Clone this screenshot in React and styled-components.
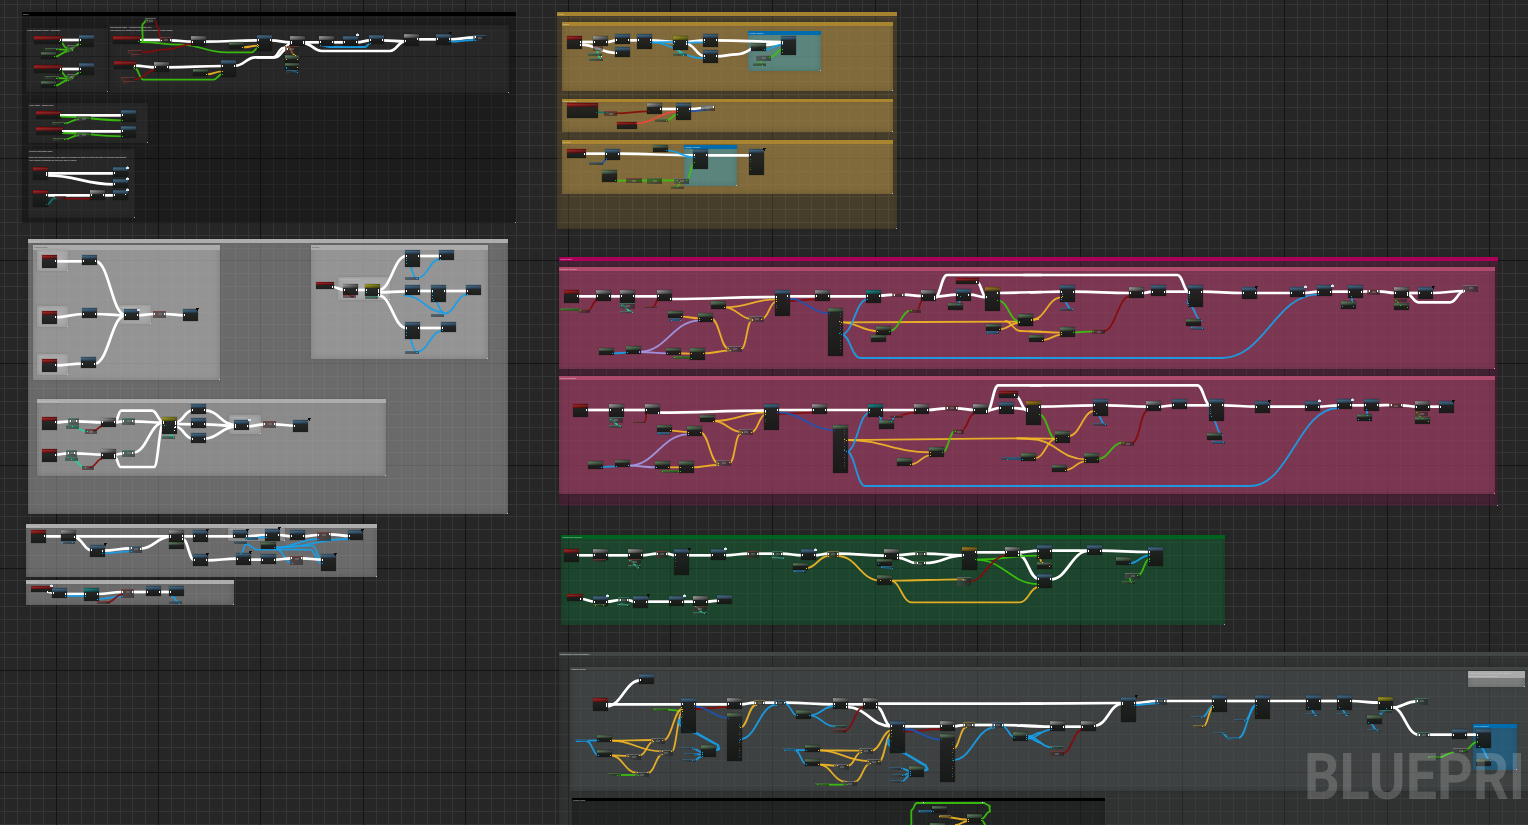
import React from "react";
import styled, { createGlobalStyle } from "styled-components";

const GlobalStyle = createGlobalStyle`
  html, body { margin: 0; padding: 0; background: #262626; overflow: hidden; }
`;

/* ---------- canvas ---------- */

const Canvas = styled.main`
  position: relative;
  width: 1528px;
  height: 825px;
  overflow: hidden;
  background: #262626;
  font-family: Roboto, "Liberation Sans", sans-serif;
`;

const Layer = styled.svg`
  position: absolute;
  inset: 0;
  width: 1528px;
  height: 825px;
  pointer-events: none;
`;

const Watermark = styled.div`
  position: absolute;
  left: 1304px;
  top: 739px;
  font: 700 64.5px/76px Roboto, sans-serif;
  color: rgba(255, 255, 255, 0.19);
  transform: scaleX(0.865);
  transform-origin: 0 0;
  white-space: nowrap;
`;

/* ---------- comment boxes ---------- */

const THEMES = {
  black: { head: "#000000", body: "rgba(8,8,8,.34)", text: "rgba(255,255,255,.6)" },
  shade: { head: "transparent", body: "rgba(62,62,62,.32)", text: "rgba(255,255,255,.62)" },
  gold: { head: "#a5822e", body: "rgba(140,112,56,.32)", text: "rgba(255,255,255,.5)" },
  goldInner: { head: "#a9852f", body: "rgba(174,142,74,.56)", text: "rgba(255,255,255,.5)" },
  sky: { head: "#006cb0", body: "rgba(62,152,172,.58)", text: "rgba(255,255,255,.6)" },
  gray: { head: "#adadad", body: "rgba(168,168,168,.52)", text: "rgba(255,255,255,.3)" },
  grayInner: { head: "#ababab", body: "rgba(190,190,190,.5)", text: "rgba(40,40,40,.55)" },
  pale: { head: "rgba(205,205,205,.08)", body: "rgba(205,205,205,.4)", text: "rgba(255,255,255,.25)" },
  pink: { head: "#ab005a", body: "rgba(114,30,74,.38)", text: "rgba(255,255,255,.55)" },
  pinkInner: { head: "#ae4a6c", body: "rgba(162,70,104,.6)", text: "rgba(255,255,255,.5)" },
  green: { head: "#00621f", body: "rgba(22,96,50,.52)", text: "rgba(255,255,255,.5)" },
  slate: { head: "#434646", body: "rgba(66,68,68,.36)", text: "rgba(255,255,255,.6)" },
  slateInner: { head: "#434646", body: "rgba(88,91,91,.38)", text: "rgba(255,255,255,.6)" },
  note: { head: "#ababab", body: "rgba(180,180,180,.52)", text: "rgba(255,255,255,.35)" },
  ocean: { head: "#006cb0", body: "rgba(20,110,165,.56)", text: "rgba(255,255,255,.6)" },
};

const CommentBox = styled.section`
  position: absolute;
  box-sizing: border-box;
  left: ${(p) => p.$x}px;
  top: ${(p) => p.$y}px;
  width: ${(p) => p.$w}px;
  height: ${(p) => p.$h}px;
  display: flex;
  flex-direction: column;
  background: ${(p) => THEMES[p.$theme].body};
  box-shadow: inset 0 0 6px rgba(0, 0, 0, 0.16), 0 0 3px rgba(0, 0, 0, 0.12);

  &::after {
    content: "";
    width: 1px;
    height: 1px;
    margin: auto 0 0 auto;
    background: rgba(255, 255, 255, 0.6);
  }
`;

const CommentHeader = styled.header`
  flex: none;
  height: ${(p) => p.$h}px;
  background: ${(p) => THEMES[p.$theme].head};
`;

const CommentText = styled.div`
  padding: 1px 0 0 1px;
  font-size: 2.3px;
  line-height: 3px;
  font-weight: 700;
  color: ${(p) => THEMES[p.$theme].text};
  white-space: pre;
`;

const COMMENTS = [
  ["black", 22, 12, 494, 211, 4, "Move"],
  ["shade", 26, 28, 82, 64, 4, "Look and move input - gamepad"],
  ["shade", 109, 25, 400, 68, 4, "Movement input - forward and right axis\nThe values are scaled by speed and then applied to the pawn"],
  ["shade", 28, 103, 120, 40, 4, "Look input - mouse turn"],
  ["shade", 28, 149, 107, 69, 4, "Crouch and jump input\n\nBind the jump action here, the jump is released on stop so that hold time is used by movement\nThe crouch is toggled by one key and is saved"],
  ["gold", 557, 12, 340, 217, 4, "Setup"],
  ["goldInner", 562, 22, 331, 69, 4, "Begin"],
  ["sky", 748, 31, 73, 40, 4, "Create widget"],
  ["goldInner", 562, 99, 331, 33, 3, "Input handler"],
  ["goldInner", 562, 140, 331, 54, 4, "On tick"],
  ["sky", 684, 145, 53, 41, 4, "Update widget"],
  ["gray", 28, 239, 480, 275, 4, "Interaction"],
  ["grayInner", 33, 245, 187, 135, 5, "Switch items"],
  ["grayInner", 311, 245, 177, 114, 5, "Reload"],
  ["gray", 37, 399, 349, 77, 4, "Weapon select state"],
  ["pale", 37, 250, 31, 21, 4, "Item 1"],
  ["pale", 37, 306, 31, 21, 4, "Item 2"],
  ["pale", 37, 354, 31, 21, 4, "Item 3"],
  ["pale", 119, 305, 32, 19, 4, "Equip selected"],
  ["pale", 229, 415, 32, 19, 4, "Equip selected"],
  ["pale", 338, 277, 52, 23, 4, "Check state of item"],
  ["gray", 26, 524, 351, 53, 4, "Pick up item"],
  ["pale", 228, 527, 57, 14, 3, "Add"],
  ["gray", 26, 580, 208, 25, 4, "Drop item"],
  ["pink", 559, 257, 939, 249, 4, "Shoot trace"],
  ["pinkInner", 559, 267, 936, 102, 4, "Primary weapon"],
  ["pinkInner", 559, 376, 936, 118, 4, "Second weapon"],
  ["green", 561, 535, 664, 90, 4, "Health and damage"],
  ["slate", 559, 652, 980, 190, 4, "Camera and view movement"],
  ["slateInner", 570, 667, 970, 124, 3, "Camera boom"],
  ["note", 1468, 671, 57, 16, 7, "Set the current view target to the camera\nthat is near the player pawn"],
  ["ocean", 1473, 724, 44, 46, 4, "Final viewport"],
  ["black", 572, 798, 533, 40, 3, "Debug draw"],
];

/* ---------- nodes ---------- */

const HEAD = {
  r: ["#8f1111", "#5a0d0d"],
  g: ["#8a8a8a", "#3b3b3b"],
  b: ["#30566f", "#2a4258"],
  v: ["#4d6b4c", "#2d3b2d"],
  y: ["#8d8a12", "#56540e"],
  o: ["#8f6a10", "#5a430c"],
  t: ["#0f7474", "#0a4a4a"],
};

const NodeBox = styled.article`
  position: absolute;
  left: ${(p) => p.$x}px;
  top: ${(p) => p.$y}px;
  width: ${(p) => p.$w}px;
  height: ${(p) => p.$h}px;
  background: linear-gradient(180deg, rgba(34, 36, 36, 0.93), rgba(20, 22, 20, 0.93));
  box-shadow: 0 0 1px rgba(0, 0, 0, 0.5);
`;

const NodeHead = styled.div`
  height: ${(p) => p.$h}px;
  background: linear-gradient(180deg, transparent 0 25%, rgba(255, 255, 255, 0.1) 40%, rgba(0, 0, 0, 0.35) 100%),
    linear-gradient(90deg, ${(p) => HEAD[p.$kind][0]}, ${(p) => HEAD[p.$kind][1]});
`;

const TINT = {
  w: "130,130,130",
  r: "140,60,60",
  b: "60,110,145",
  v: "80,125,70",
  y: "165,140,70",
  t: "70,140,115",
};

const CompactNode = styled.article`
  position: absolute;
  box-sizing: border-box;
  left: ${(p) => p.$x}px;
  top: ${(p) => p.$y}px;
  width: ${(p) => p.$w}px;
  height: ${(p) => p.$h}px;
  border-top: 1px solid rgba(${(p) => TINT[p.$tint]}, 0.6);
  background: linear-gradient(90deg, rgba(${(p) => TINT[p.$tint]}, 0.28), rgba(0, 0, 0, 0.1)),
    rgba(34, 36, 36, 0.52);
  &::after {
    content: "";
    box-sizing: border-box;
    display: ${(p) => (p.$h > 4 ? "block" : "none")};
    width: 4px;
    height: 2px;
    margin: 1px auto 0;
    background: rgba(180, 180, 180, 0.28);
  }
`;

/* ---------- wires ---------- */

const COLORS = {
  w: "#ffffff",
  g: "#3ac40c",
  r: "#860b0b",
  R: "#f0453c",
  b: "#179fe8",
  B: "#1b55b4",
  y: "#f2b626",
  t: "#25d29c",
  T: "#0b7a6e",
  l: "#a298e6",
};
const MIX = ["#1f8fb8", "#3a9a1c", "#7a1414", "#1c6f63", "#b58a20", "#5a3a7a"];

/*
 * Each graph holds its origin on the canvas and its items in graph units,
 * three to a pixel.
 *   nodes: kind x y w h   (kind + "k" prefix = compact node with a tint)
 *   wires: color x y x y ...
 *   marks: color x y      (single pin), "col" x y0 y1 for a column of pins,
 *          "badge" x y for a latent / message marker
 */
const GRAPHS = [
  {
    at: [0, 0],
    nodes: `r 102 108 84 24;b 237 105 45 36;v 123 156 45 20;kv 135 144 42 9;kw 202 136 30 22
      r 102 195 84 24;b 237 190 45 36;v 123 243 45 20;kv 135 228 42 9;kw 202 222 30 22
      r 339 108 84 24;kw 435 54 33 15;kr 480 111 36 16;g 573 108 45 30;kr 384 150 42 12;kr 393 162 30 9;v 687 127 45 20;b 771 105 45 48
      r 342 184 66 24;g 462 186 45 30;kr 363 231 42 12;kr 369 243 36 10;v 579 207 45 20;b 663 180 45 50
      r 108 333 75 24;b 363 330 45 36;kv 156 366 42 8;kw 228 349 45 14
      r 108 381 81 24;b 363 378 45 36;kv 160 414 42 8;kw 228 397 45 14
      r 99 501 45 39;b 339 501 45 30;b 339 537 45 27
      r 99 570 45 51;kr 165 588 33 12;g 270 570 45 30;b 339 570 45 30`,
    wires: `w 184 120 240 120;g 180 124 200 144 215 148;g 170 148 215 150;g 215 144 240 132;g 165 170 205 153
      w 184 207 240 207;g 180 212 200 230 215 234;g 170 234 215 236;g 215 230 240 218;g 165 257 205 240
      w 422 120 484 120;w 512 121 576 125;w 616 125 775 121;g 422 126 540 134 680 157 755 157 775 143;r 425 157 500 148 576 132
      g 427 126 428 72 440 60;r 465 62 474 84 482 118;y 728 142 775 137
      w 404 197 466 202;w 504 202 667 198;g 404 204 430 239 640 239 667 222;r 405 238 466 210;y 620 223 667 214;w 706 197 766 172 826 172 862 146
      w 182 346 367 346;g 182 350 367 361;g 195 370 235 358
      w 188 394 367 394;g 188 399 367 409;g 195 418 235 406
      w 140 520 343 520;w 140 526 343 553;w 140 586 273 586;w 312 586 343 586;T 140 614 165 594;r 190 596 273 596`,
    marks: `badge 382 504;badge 382 536;badge 382 569;g 179 125;g 179 212;w 378 586;g 417 127;g 403 204`,
  },
  {
    at: [250, 0],
    nodes: `g 120 108 45 30;kr 105 138 42 24;v 105 165 43 24;v 105 189 43 21;kb 108 210 36 8
      g 207 108 45 30;b 279 108 45 30;b 357 105 45 27;g 462 102 45 36;b 558 102 45 32;kb 669 105 39 18`,
    wires: `w 62 121 123 127;w 162 127 210 127;w 249 127 283 127;w 320 127 361 121;w 398 121 465 124;w 162 130 215 153 420 153 465 124
      w 504 118 562 118;w 600 118 675 112;b 600 125 675 120;b 212 136 240 141 345 141 361 130;w 20 172 70 172 100 144 123 129
      y 112 140 135 165;b 112 206 140 216`,
    marks: `y 112 181;y 145 181;b 112 205;y 145 205;y 25 136;y 25 142;badge 322 106;mark 601 100`,
  },
  {
    at: [550, 0],
    nodes: `r 51 108 45 39;g 129 108 45 30;kr 129 138 30 15;kt 114 159 42 9;kt 117 174 42 9;b 195 102 45 30;b 195 141 45 30;b 261 102 45 45
      y 369 108 45 42;kt 369 159 42 9;b 459 102 45 39;b 459 150 45 39;v 603 130 45 23;b 693 108 45 57;kw 618 165 45 18;kv 609 188 39 9
      r 51 309 93 45;kr 162 333 39 14;r 201 366 60 21;g 291 309 45 33;kv 315 357 39 8;b 378 309 45 51;kw 453 315 42 18
      r 51 447 57 27;b 165 447 45 33;kb 117 486 42 8;v 309 435 45 21;b 429 447 45 60;v 156 510 45 36;kr 228 534 48 15;kv 291 534 45 18;kw 372 534 45 18;kv 363 558 39 9;b 597 447 45 78`,
    wires: `w 92 126 133 126;w 170 126 199 121;w 236 121 265 121;w 92 134 199 159;w 302 121 373 126;b 302 127 373 126;b 302 127 463 175;w 410 126 463 121
      b 410 128 463 127;w 410 132 463 168;w 500 121 697 126;w 500 169 560 163 640 135 697 130;b 645 149 697 133;g 660 171 697 149;g 632 185 635 196;t 138 148 150 175;t 373 134 400 166
      T 140 336 170 338;r 198 340 295 334;w 332 327 382 327;R 260 370 382 335;g 350 361 382 343;w 420 327 490 321;B 420 334 470 330
      w 104 461 169 461;w 206 461 433 466;w 470 466 601 466;b 350 451 433 472;B 155 491 169 478;g 197 542 380 541;g 385 558 388 548;g 410 541 433 488`,
    marks: `w 201 159;mark 642 448;w 157 172;col 604 476 516;B 172 476;g 700 149;g 700 160;r 733 134`,
  },
  {
    at: [20, 230],
    nodes: `r 66 75 45 39;b 186 75 45 30;r 66 243 45 39;b 186 234 45 30;r 66 387 45 39;b 183 381 45 33;b 312 238 45 32;kr 399 243 39 21;b 489 237 45 36
      r 66 561 45 39;kt 144 564 33 21;kt 138 585 39 12;kr 195 596 36 15;g 243 564 45 27;kt 306 564 39 21;y 426 561 45 51;kt 426 618 39 9
      b 513 522 45 30;b 513 564 45 30;b 513 609 45 30;b 642 570 45 30;kr 729 573 39 21;b 819 570 45 36
      r 66 657 45 39;kt 138 661 33 20;kt 135 681 39 12;kr 186 708 36 12;g 243 657 45 30;kt 306 660 39 21`,
    wires: `w 107 94 190 94;w 107 262 190 252;w 107 406 187 401;w 227 94 316 255;w 227 252 316 256;w 224 401 316 256;w 353 256 403 252;w 434 252 493 256
      w 107 577 150 574;w 172 574 247 577;w 284 577 310 574;w 284 577 304 542 396 542 430 576;w 340 574 430 578;t 158 590 200 604;r 222 602 247 588
      w 107 674 145 670;w 166 670 247 674;w 284 674 310 670;w 340 668 430 578;w 284 680 302 711 402 711 430 580;t 155 687 195 712;r 210 712 247 686
      w 467 577 517 541;w 467 582 517 583;w 467 590 517 626;w 554 541 646 585;w 554 583 646 588;w 554 626 646 590;w 683 589 733 583;w 765 583 823 587;t 434 586 460 622`,
    marks: `badge 355 239;badge 687 571;mark 532 238;mark 866 568;w 466 595;w 466 604`,
  },
  {
    at: [300, 230],
    nodes: `r 48 156 54 21;g 129 162 45 33;kr 129 195 39 9;y 195 162 45 36;kt 195 198 39 9
      b 315 60 45 51;b 417 60 45 30;kb 315 141 42 9;b 315 165 45 30;b 393 165 45 51;b 498 165 45 30;kb 393 252 39 9;b 315 276 45 51;b 423 276 45 30;kb 315 363 42 9`,
    wires: `w 98 171 133 180;w 170 180 199 180;w 236 180 319 78;w 236 187 319 184;w 236 196 319 294;w 356 78 421 78;w 356 183 397 183;w 434 183 502 183;w 356 294 427 294
      b 320 90 350 145;b 350 145 421 87;b 313 196 432 247;b 402 210 432 250;b 432 252 502 193;b 320 306 350 366;b 350 366 427 302;r 135 186 160 200;t 202 186 230 200`,
    marks: `b 321 86;b 321 94;b 321 102;b 400 190;b 400 198;b 400 206;b 321 300;b 321 310;b 321 318`,
  },
  {
    at: [20, 515],
    nodes: `r 33 45 45 39;g 123 45 45 33;kb 129 79 36 9;b 210 90 45 36;kb 328 94 38 20;g 447 45 45 36;v 447 81 45 21;b 519 45 45 36;b 519 118 45 36
      b 639 45 45 24;kb 642 79 38 10;kb 676 66 38 8;b 735 42 45 36;b 810 45 45 30;kr 891 51 42 27;b 984 45 45 30;v 723 81 45 21;b 648 114 45 36;b 723 118 45 30;kr 810 123 39 27;b 903 118 45 50
      r 33 213 66 18;b 96 219 45 30;t 192 219 45 39;kr 303 222 39 27;kr 231 258 39 9;b 378 213 45 30;b 447 213 45 30;kb 447 259 39 8`,
    wires: `w 74 64 451 64;w 164 67 214 106;w 250 107 332 100;b 250 115 332 109;w 362 101 451 65;w 488 64 523 64;w 488 72 523 136;w 560 64 643 64;w 560 136 652 131;w 680 64 739 60
      w 776 60 814 64;w 851 64 895 60;w 929 58 988 63;b 680 72 739 66;b 765 98 895 72;b 765 98 988 72;b 765 98 878 92 905 136;b 765 104 870 104 905 146;b 765 98 815 144
      b 678 87 712 104 765 104;b 664 116 678 87;w 689 134 727 134;w 764 134 814 130;w 845 130 907 134
      w 84 230 100 234;w 137 237 196 237;b 137 243 196 243;w 233 237 307 231;b 233 252 307 244;w 338 231 382 231;w 419 231 451 231;r 262 262 307 238;b 455 243 478 264`,
    marks: `mark 256 88;mark 562 45;mark 562 117;mark 682 46;mark 778 40;mark 689 112;mark 944 118;mark 1027 46;badge 94 214;b 130 84;b 160 84`,
  },
  {
    at: [555, 250],
    nodes: `r 27 120 45 39;kv 18 174 54 8;kr 72 177 33 12;g 123 120 45 33;g 195 120 45 39;kt 195 159 45 18;kt 195 183 39 7;g 306 120 45 33;kr 267 168 39 7
      v 339 183 45 21;kb 342 205 36 9;v 429 189 45 27;v 468 153 45 24;kw 582 198 45 18;b 660 120 45 78;g 780 120 45 33;v 819 174 45 144
      v 132 294 45 21;v 213 288 45 24;v 333 294 45 21;kv 354 318 51 8;v 405 294 45 36;kw 516 288 45 18;t 933 120 45 39;kr 1011 129 39 12;g 1098 120 45 33
      v 963 228 45 27;v 948 255 45 21;kr 1062 177 36 12;r 1203 84 69 18;b 1203 117 45 36;v 1179 159 45 21;o 1290 111 45 72;v 1389 192 45 36;v 1293 222 45 21;kb 1293 244 39 9`,
    wires: `w 68 139 127 139;w 164 139 199 139;w 236 139 310 139;w 347 147 664 141;w 700 139 784 139;w 821 139 937 139;w 974 137 1016 134;w 1045 134 1102 138;w 1139 140 1207 134;w 1139 144 1176 75 1300 75 1460 75
      g 20 178 76 180;r 98 182 127 150;r 295 170 310 149;t 200 165 230 186;b 350 210 375 210;y 380 200 433 205;y 510 172 664 148;y 510 172 590 207;y 620 207 664 155;y 470 207 520 296
      y 560 296 590 212;y 446 310 525 302;y 374 310 409 311;l 255 305 433 212;l 255 306 337 310;b 173 310 217 308;g 360 322 409 324;r 700 153 784 148;B 700 146 823 190
      y 860 217 967 243;y 860 217 1350 215 1393 215;b 860 253 937 148;b 860 253 915 324 1460 324;g 1004 243 1068 181;r 1085 186 1102 152;w 1265 95 1294 142;w 1243 134 1294 142;w 1330 129 1460 126;g 1330 152 1393 214
      y 1334 238 1393 218;y 1350 213 1395 243 1460 245;y 1430 209 1450 207;b 1212 162 1215 140;b 1300 248 1325 248`,
    marks: `col 859 190 312;col 666 164 190;y 856 217;b 856 253;w 1139 149;r 987 243`,
  },
  {
    at: [1030, 250],
    nodes: `v -33 192 42 36;b 90 105 45 50;kb 90 174 38 8;v 90 231 45 30;v -3 255 45 21;kr 186 237 39 15;g 297 111 45 33;b 363 105 45 33;b 474 105 45 66;v 468 207 45 21;kb 483 231 38 8
      b 636 111 45 36;b 780 111 45 30;b 861 105 45 33;b 954 105 45 39;v 933 153 45 24;kr 1011 117 39 17;g 1092 111 45 33;kr 1092 144 39 12;v 1092 158 45 21;b 1164 111 45 36;kw 1299 105 45 21`,
    wires: `w 0 127 94 125;w 131 125 301 129;w 338 129 367 125;w 404 125 478 125;w -20 75 442 75 478 128;w 515 125 640 129;w 677 129 784 129;w 821 129 865 125;w 902 125 958 125;w 995 125 1016 124
      w 1045 124 1096 129;w 1133 129 1168 129;w 1205 129 1303 123;w 1133 134 1165 157 1260 157 1303 123;y 5 210 94 142;b 97 148 125 178;y 0 244 94 248;y 38 270 94 254;g 131 247 190 244;r 220 244 301 138
      b 478 165 512 210;b 485 232 515 236;b -60 324 575 324 865 133;b 965 140 967 155;b 478 130 474 160;g 1098 150 1110 165`,
    marks: `mark 679 112;badge 824 112;badge 906 107;mark 1208 112;col 481 134 160;y 98 140;b 98 134;b 939 172;g 1133 175;b 973 172`,
  },
  {
    at: [555, 250],
    nodes: `r 54 462 45 39;g 162 462 45 39;kt 162 501 42 18;kt 162 525 39 8;g 270 462 45 30;kr 234 513 39 7;v 306 525 45 21;kb 306 547 38 9;v 396 528 45 30;v 435 495 45 21;kw 552 537 42 18
      b 627 462 45 78;g 771 462 45 30;v 834 525 45 144;v 99 633 45 24;v 180 630 45 21;v 300 633 45 24;kv 318 660 50 8;v 372 633 45 36;kw 483 630 45 18;t 939 462 45 39;v 972 510 45 27;kr 1005 495 40 8
      g 1077 462 45 30;kr 1170 465 39 19;g 1254 462 45 30;kr 1194 537 33 14;v 1122 591 45 30;v 1026 624 45 24;r 1332 423 57 21;b 1332 456 45 36;o 1413 453 45 72;kb 1338 621 60 9;v 1398 609 45 24`,
    wires: `w 95 480 166 480;w 203 480 274 480;w 311 488 631 482;w 668 480 775 480;w 812 480 943 480;w 980 480 1081 480;w 1118 480 1175 475;w 1205 475 1258 480;w 1295 482 1336 474;w 1295 486 1330 406 1460 406
      t 168 508 195 530;r 270 515 275 490;b 312 550 340 550;y 347 542 400 546;y 476 513 631 488;y 476 513 560 546;y 590 546 631 494;y 437 548 490 640;y 525 638 555 553;y 413 652 490 645;y 341 652 376 652
      l 221 647 400 553;l 221 647 304 652;b 140 651 184 649;g 325 664 376 664;r 668 492 775 488;B 668 487 838 540;y 875 570 1420 565;y 875 570 1126 607;b 875 604 943 488;b 875 604 930 708 1460 708
      b 976 500 978 514;b 1012 514 1016 500;r 1012 500 1081 488;y 1067 643 1126 616;g 1163 606 1200 543;r 1220 541 1258 490;w 1380 436 1417 482;w 1373 474 1417 478;b 1360 627 1402 627`,
    marks: `col 871 540 662;col 634 506 532;y 871 570;b 871 604`,
  },
  {
    at: [1030, 250],
    nodes: `b 189 447 45 51;kb 189 519 41 8;g 348 453 45 30;b 426 447 45 30;b 537 447 45 66;v 531 549 45 21;kb 546 573 38 8;v 75 543 45 36;v 162 609 45 30;v 66 645 45 21;kr 273 573 39 14
      b 675 453 45 36;b 825 453 45 30;b 921 447 45 30;b 1002 447 45 36;v 981 492 45 21;kr 1077 459 42 15;g 1155 453 45 30;kr 1155 483 39 14;v 1155 501 45 21;b 1227 453 45 36`,
    wires: `w 29 470 193 466;w 230 466 352 470;w 389 470 430 466;w 467 466 541 466;w 0 406 502 406 541 466;w 578 466 679 470;w 716 470 829 470;w 866 470 925 466;w 962 466 1006 466;w 1043 466 1082 465;w 1115 466 1159 470;w 1196 470 1231 470
      g 29 494 79 570;y 116 558 193 483;b 200 490 225 523;y -40 565 79 566;y -40 565 0 567 166 628;y 15 625 79 566;y 107 660 166 634;g 203 627 278 578;r 308 578 352 482
      b 0 708 660 708 925 474;b 541 470 539 490;b 545 500 575 555;b 550 575 578 578;b 1010 478 1012 495;g 1160 488 1175 504`,
    marks: `col 544 476 506;mark 718 452;badge 868 452;badge 965 450;mark 1270 452;b 988 509;b 1021 509;g 1196 517`,
  },
  {
    at: [555, 525],
    nodes: `r 27 72 45 39;g 114 72 45 33;kr 114 103 39 8;g 219 72 45 30;kr 219 103 38 16;kt 219 121 38 8;kr 303 78 36 20;b 357 72 45 78;b 468 72 45 33;kr 576 78 36 20;kt 651 78 33 18;kt 651 97 36 8;b 738 72 45 33;v 714 114 45 21;kb 714 136 38 8;ky 816 78 36 20
      r 36 207 48 21;b 114 213 45 30;kv 114 237 38 8;kt 190 216 33 18;kt 186 236 38 8;b 234 213 45 36;b 342 213 45 30;g 414 213 45 30;kr 414 243 42 14;kt 414 260 42 8;b 486 210 45 27`,
    wires: `w 68 91 118 91;w 155 91 223 91;w 260 91 307 86;w 335 86 361 91;w 398 91 472 91;w 509 91 580 86;w 608 86 655 86;w 680 86 742 91;w 779 91 820 86;w 848 86 991 92
      y 755 129 820 93;y 848 93 975 167;t 225 106 250 128;t 655 97 684 101;b 720 139 745 139;w 78 222 118 230;w 155 230 195 225;w 218 225 238 230;w 275 230 346 230;w 383 230 418 230;w 455 230 490 227;t 195 238 215 240;t 422 245 446 265;g 122 240 145 240`,
    marks: `mark 401 73;badge 510 73;badge 780 74;badge 156 214;mark 278 211;badge 387 214;col 364 100 138`,
  },
  {
    at: [860, 525],
    nodes: `g 72 72 45 33;v 51 102 45 21;kb 63 124 38 8;kv 165 78 36 18;kv 162 108 36 14;o 306 66 45 69;g 435 66 45 30;kw 291 156 42 27;v 51 150 45 30;b 531 60 45 42;v 531 111 45 21;b 531 147 45 42;b 681 60 45 30;b 864 66 45 57;v 768 96 45 24;kw 795 144 45 18;kv 787 169 38 9`,
    wires: `w 113 90 170 86;w 113 98 170 114;w 196 86 310 91;w 196 114 310 91;w 347 82 439 82;w 476 82 535 77;w 572 77 685 77;w 722 77 868 81;w 476 90 535 161;w 572 163 685 78
      g 347 104 535 92;g 347 104 535 177;r 325 170 439 92;y 92 167 310 163;y 92 167 155 232 480 232 535 186;y 538 96 545 112;b 809 115 868 91;g 835 151 868 102;g 810 160 812 172;b 65 126 95 130`,
    marks: `col 312 92 114;b 56 118;r 90 118;y 570 127;b 871 91;g 871 103;b 871 111`,
  },
  {
    at: [555, 645],
    nodes: `r 114 159 45 39;b 252 87 45 30;b 378 159 45 105;kv 294 189 45 8;g 516 159 45 33;v 516 204 45 144;ky 597 165 33 15;kb 657 165 36 15;v 723 195 45 27;g 834 159 45 33;kt 834 240 39 10;kr 834 252 39 12;g 924 159 45 33
      kb 60 283 38 7;v 126 270 45 21;v 126 315 45 21;kw 288 279 42 18;kw 213 327 45 18;kw 312 315 42 18;kw 240 380 42 16;kv 159 385 38 9;kb 378 307 45 7;kb 387 324 40 7;kb 381 343 42 8;v 438 300 45 36
      b 1005 228 45 96;g 1155 228 45 30;v 1155 267 45 144;ky 1224 232 36 17;kb 1311 232 36 17;v 1374 261 45 27;kb 684 310 38 8;v 750 300 45 21;v 750 342 45 21;kw 912 310 42 17;kw 837 358 45 17;kw 936 343 42 17;kw 864 408 42 15;kv 780 414 42 8
      kb 1002 366 42 8;kb 1011 386 40 8;kb 1005 405 40 8;v 1062 363 45 33;v 1131 483 45 20;kb 1089 495 38 8;ky 1152 510 36 8;v 1236 507 45 27;v 1125 534 45 24`,
    wires: `w 155 184 256 106;w 155 178 382 178;w 419 178 520 178;w 557 178 600 173;w 626 173 662 173;w 690 173 838 178;w 875 178 928 178;w 965 176 1460 176;w 875 186 1009 244;w 965 186 1009 244;w 1046 244 1159 244;w 1196 244 1228 240;w 1255 240 1316 240;w 1343 240 1460 244
      g 300 194 340 194 382 198;r 419 192 520 186;B 419 185 520 219;y 557 247 602 180;b 557 282 662 180;b 690 176 727 212;b 764 211 838 183;b 764 211 838 244;r 865 260 928 185
      b 65 288 128 286;b 95 288 130 331;y 167 287 292 285;y 167 287 320 319;y 167 331 220 333;y 255 331 295 290;y 167 331 245 383;y 280 383 322 328;y 325 286 382 192;y 350 320 382 200;g 190 390 250 390
      BB 382 225 372 226 374 238 392 255 425 265 488 300 492 312 482 315;b 415 311 442 322;b 420 328 442 328;b 415 347 442 334
      y 1196 310 1232 248;b 1196 345 1318 248;b 1343 244 1378 276;b 1415 276 1460 262;b 1415 276 1460 294;r 1046 260 1159 252;B 1046 252 1159 284;b 690 315 754 315;b 720 315 754 358
      y 791 316 918 317;y 791 316 940 348;y 791 358 845 362;y 880 362 918 322;y 791 358 872 410;y 900 410 945 356;y 950 317 1009 256;y 972 350 1009 265;g 790 419 875 419;BB 1009 285 999 287 1001 298 1015 310 1048 324 1112 362 1117 373 1107 377;b 1040 371 1066 378;b 1045 390 1066 384;b 1040 409 1066 390
      g 1108 474 1290 474;g 1280 521 1304 500 1304 485 1290 474;g 1280 526 1296 545;g 1068 545 1070 495 1085 474 1108 474;b 1095 499 1135 499;y 1155 514 1240 524;y 1200 540 1240 528`,
    marks: `col 556 236 340;col 1195 290 404;col 384 206 245;col 1011 265 300;y 382 188;y 382 196;b 382 219;w 1108 474;w 1285 474`,
  },
  {
    at: [1030, 645],
    nodes: `g 60 228 45 30;g 153 228 45 30;kt 60 304 38 8;kr 60 318 42 14;b 273 156 45 75;kb 375 159 36 20;b 546 150 45 51;b 675 150 45 72;kb 483 213 38 7;ky 489 241 36 8;kb 549 262 40 7;kb 588 276 40 7;kb 612 223 38 7;b 828 150 45 45;kb 828 205 38 7;b 921 150 45 45;kb 921 205 38 7
      y 1044 156 45 39;kt 1050 194 36 8;v 1011 210 45 27;kb 1011 253 38 7;kt 1155 159 39 20;kt 1162 262 38 16;b 1266 252 45 30;b 1338 252 45 57;kw 1269 309 45 15;kv 1194 334 38 8;v 1338 342 45 21`,
    wires: `w -30 176 277 174;w -30 242 64 245;w 101 245 157 245;w 194 242 277 176;b -10 282 64 254;b -10 272 64 307;r 98 325 157 254;w 314 174 380 168;b 314 180 385 175;w 405 168 550 168;w 587 168 679 168;w 716 168 832 168;w 869 168 925 168;w 962 168 1048 173
      w 1085 188 1160 169;w 1085 186 1166 269;w 1196 269 1270 269;w 1307 269 1342 269;b 517 216 550 183;y 520 245 550 186;b 645 226 679 180;b 580 266 595 280 625 279 679 180;b 838 186 858 210;b 931 186 951 210;b 1070 190 1052 208;b 1018 232 1042 256;g 1228 337 1270 322;g 1300 318 1342 291;b 1350 305 1380 345;g 1198 337 1230 337`,
    marks: `mark 317 153;col 682 180 212;r 835 184;r 928 184;y 550 184;b 1344 278;g 1344 290`,
  },
];

const rows = (text) =>
  text
    .split(/[;\n]/)
    .map((row) => row.trim().split(/\s+/))
    .filter((row) => row.length > 2)
    .map(([kind, ...nums]) => [kind, ...nums.map(Number)]);

const place = ([ox, oy]) => ({
  x: (v) => ox + v / 3,
  y: (v) => oy + v / 3,
});

function curve(points) {
  let d = `M${points[0][0]} ${points[0][1]}`;
  for (let i = 1; i < points.length; i++) {
    const [ax, ay] = points[i - 1];
    const [bx, by] = points[i];
    const reach = Math.max(Math.abs(bx - ax) * 0.45, 1);
    d += ` C${ax + reach} ${ay} ${bx - reach} ${by} ${bx} ${by}`;
  }
  return d;
}

const pointsOf = (nums, at) => {
  const { x, y } = place(at);
  const out = [];
  for (let i = 0; i < nums.length; i += 2) out.push([x(nums[i]), y(nums[i + 1])]);
  return out;
};

function Wire({ kind, nums, at }) {
  const thick = kind === "BB";
  const pts = pointsOf(nums, at);
  const d = thick ? "M" + pts.map((p) => p.join(" ")).join("L") : curve(pts);
  return (
    <path
      d={d}
      fill="none"
      stroke={thick ? COLORS.b : COLORS[kind]}
      strokeWidth={kind === "w" ? 2.7 : thick ? 2.5 : 1.8}
      strokeLinejoin="round"
      opacity={kind === "w" ? 1 : 0.92}
    />
  );
}

function WirePins({ kind, nums, at }) {
  if (kind === "BB") return null;
  const pts = pointsOf(nums, at);
  const [first, last] = [pts[0], pts[pts.length - 1]];
  const h = kind === "w" ? 2 : 1;
  return (
    <g fill={COLORS[kind]}>
      <rect x={Math.round(first[0] - 1)} y={Math.round(first[1] - h / 2)} width="1" height={h} />
      <rect x={Math.round(last[0])} y={Math.round(last[1] - h / 2)} width="1" height={h} />
    </g>
  );
}

function Mark({ kind, nums, at }) {
  const { x, y } = place(at);
  const px = Math.round(x(nums[0]));
  const py = Math.round(y(nums[1]));
  if (kind === "col") {
    const count = Math.floor((nums[2] - nums[1]) / 8);
    return Array.from({ length: count }, (_, i) => (
      <rect key={i} x={px - 1} y={Math.round(y(nums[1] + i * 8))} width="1" height="1" fill={MIX[i % MIX.length]} opacity=".65" />
    ));
  }
  if (kind === "badge")
    return (
      <g>
        <rect x={px - 1} y={py - 1} width="3" height="2" fill="#d5e6ee" />
        <rect x={px} y={py - 2} width="1" height="1" fill="#8fa7b2" />
      </g>
    );
  if (kind === "mark") return <path d={`M${px - 1} ${py - 1}h3v1h-1v2h-1v-1h-1z`} fill="#0b0b0b" />;
  return <rect x={px - 1} y={py - 1} width="1" height="1" fill={COLORS[kind]} />;
}

function GraphNode({ kind, nums, at }) {
  const { x, y } = place(at);
  const left = Math.round(x(nums[0]));
  const top = Math.round(y(nums[1]));
  const w = Math.round(nums[2] / 3);
  const h = Math.round(nums[3] / 3);
  if (kind[0] === "k") return <CompactNode $x={left} $y={top} $w={w} $h={h} $tint={kind[1]} />;
  return (
    <NodeBox $x={left} $y={top} $w={w} $h={h}>
      <NodeHead $kind={kind} $h={h > 7 ? 4 : 3} />
    </NodeBox>
  );
}

function Grid() {
  const lines = Array.from({ length: 124 }, (_, i) => ({
    at: Math.floor(56 + 12.8 * (i - 4)),
    major: (i - 4) % 8 === 0,
  }));
  const minor = lines.filter((l) => !l.major);
  const major = lines.filter((l) => l.major);
  const draw = (list) => list.map(({ at }) => `M${at + 0.5} 0V825M0 ${at + 0.5}H1528`).join("");
  return (
    <Layer viewBox="0 0 1528 825">
      <path d={draw(minor)} stroke="#353535" />
      <path d={draw(major)} stroke="#141414" />
    </Layer>
  );
}

const each = (field, Item) =>
  GRAPHS.flatMap((graph, g) =>
    rows(graph[field]).map(([kind, ...nums], i) => <Item key={`${g}-${i}`} kind={kind} nums={nums} at={graph.at} />)
  );

export default function App() {
  return (
    <>
      <GlobalStyle />
      <Canvas>
        <Grid />
        {COMMENTS.map(([theme, x, y, w, h, head, text], i) => (
          <CommentBox key={i} $theme={theme} $x={x} $y={y} $w={w} $h={h}>
            <CommentHeader $theme={theme} $h={head}>
              <CommentText $theme={theme}>{text}</CommentText>
            </CommentHeader>
          </CommentBox>
        ))}
        <Layer viewBox="0 0 1528 825">{each("wires", Wire)}</Layer>
        {each("nodes", GraphNode)}
        <Layer viewBox="0 0 1528 825" shapeRendering="crispEdges">
          {each("wires", WirePins)}
          {each("marks", Mark)}
        </Layer>
        <Watermark>BLUEPRINT</Watermark>
      </Canvas>
    </>
  );
}
